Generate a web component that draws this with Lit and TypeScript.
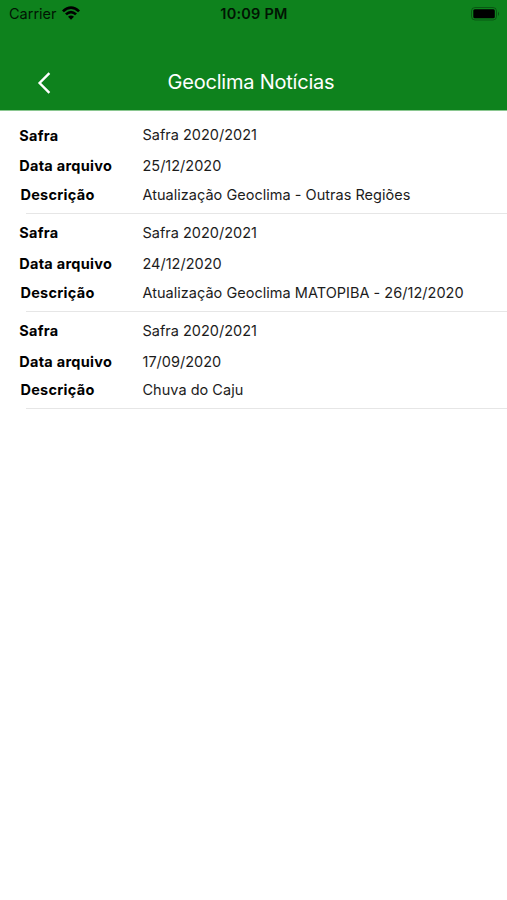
import { LitElement, html, css } from "lit";
import { customElement, property } from "lit/decorators.js";

@customElement("news-entry")
class NewsEntry extends LitElement {
  @property() season = "";
  @property() date = "";
  @property() description = "";
  static styles = css`
    :host { display: block; height: 97.7px; box-sizing: border-box; padding-top: 9.3px; }
    .row { display: grid; grid-template-columns: 123.3px 1fr; padding-left: 19.2px; line-height: 30px; height: 29.6px; font-size: 14.5px; white-space: nowrap; color: #1c1c1c; }
    .first { height: 31px; }
    .last { line-height: 28px; height: 28px; }
    .last .label { padding-left: 1.2px; }
    .last .value { letter-spacing: .02px; }
    .label { font-weight: 700; letter-spacing: .29px; color: #000; }
    .first .label { padding-top: .5px; }
    .line { height: 1px; background: #e6e6e6; margin: 4.1px 0 0 26px; }
  `;
  render() {
    return html`
      <div class="row first"><span class="label">Safra</span><span class="value">${this.season}</span></div>
      <div class="row"><span class="label">Data arquivo</span><span class="value">${this.date}</span></div>
      <div class="row last"><span class="label">Descrição</span><span class="value">${this.description}</span></div>
      <div class="line"></div>`;
  }
}

@customElement("app-root")
export class AppRoot extends LitElement {
  static styles = css`
    :host { display: block; height: 900px; background: #fff; font-family: Inter, sans-serif; color: #000; overflow: hidden; }
    .top { height: 111px; background: #0e821d; border-bottom: 1px solid #8ac790; box-sizing: border-box; }
    .status { display: grid; grid-template-columns: 1fr auto 1fr; height: 28px; line-height: 28px; font-size: 14.5px; padding: 0 7px 0 9px; color: #011403; }
    .left { display: flex; align-items: center; gap: 5px; }
    .left svg { margin-top: -2px; }
    .time { font-weight: 600; letter-spacing: .22px; margin-right: 1px; }
    .right { display: flex; justify-content: flex-end; align-items: center; }
    .right svg { margin-top: -1px; }
    .nav { display: grid; grid-template-columns: 60px 1fr 65px; align-items: center; height: 52px; margin-top: 28px; color: #fff; }
    .back { padding: 2px 0 0 37px; display: block; }
    .title { text-align: center; font-size: 20px; line-height: 28px; letter-spacing: -.22px; }
  `;
  render() {
    return html`
      <header class="top">
        <div class="status">
          <div class="left"><span>Carrier</span>
            <svg width="18" height="14" viewBox="0 0 18 14"><path d="M0 4.4Q9-4 18 4.4L16.1 6.2Q9-.2 1.9 6.2ZM3 7.5Q9 2 15 7.5L13.1 9.3Q9 5.6 4.9 9.3ZM6 10.7Q9 8.1 12 10.7L9 13.7Z"/></svg>
          </div>
          <span class="time">10:09 PM</span>
          <div class="right"><svg width="29" height="14" viewBox="0 0 29 14"><rect x=".5" y=".5" width="25" height="12.5" rx="3.5" fill="none" stroke="#000" stroke-opacity=".32"/><rect x="2.3" y="2.3" width="21.5" height="9" rx="1.5"/><path d="M27 4.5Q29 6.8 27 9Z" opacity=".4"/></svg></div>
        </div>
        <div class="nav">
          <svg class="back" width="14" height="22" viewBox="0 0 14 22"><path d="M12.4 1.2L2.6 11L12.4 20.8" fill="none" stroke="#fff" stroke-width="2.4"/></svg>
          <span class="title">Geoclima Notícias</span>
        </div>
      </header>
      <news-entry season="Safra 2020/2021" date="25/12/2020" description="Atualização Geoclima - Outras Regiões"></news-entry>
      <news-entry season="Safra 2020/2021" date="24/12/2020" description="Atualização Geoclima MATOPIBA - 26/12/2020"></news-entry>
      <news-entry season="Safra 2020/2021" date="17/09/2020" description="Chuva do Caju"></news-entry>`;
  }
}
